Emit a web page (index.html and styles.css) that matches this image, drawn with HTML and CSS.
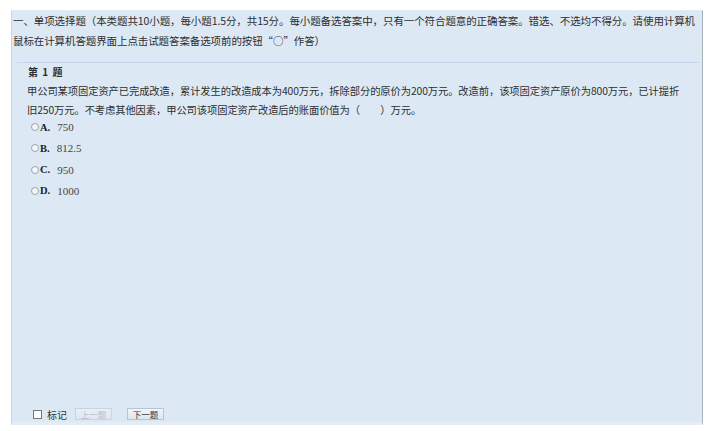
FILE: index.html
```html
<!DOCTYPE html>
<html lang="zh-CN">
<head>
<meta charset="utf-8">
<link rel="stylesheet" href="styles.css">
</head>
<body>
<div class="panel">
  <div class="header">一、单项选择题（本类题共10小题，每小题1.5分，共15分。每小题备选答案中，只有一个符合题意的正确答案。错选、不选均不得分。请使用计算机<br>鼠标在计算机答题界面上点击试题答案备选项前的按钮“○”作答）</div>
  <div class="sep"></div>
  <div class="content">
    <div class="qno">第&nbsp;1&nbsp;题</div>
    <div class="question">甲公司某项固定资产已完成改造，累计发生的改造成本为400万元，拆除部分的原价为200万元。改造前，该项固定资产原价为800万元，已计提折<br>旧250万元。不考虑其他因素，甲公司该项固定资产改造后的账面价值为（　　）万元。</div>
    <div class="options">
      <label class="opt"><span class="radio"></span><b class="letter">A.</b><span class="val">750</span></label>
      <label class="opt"><span class="radio"></span><b class="letter">B.</b><span class="val">812.5</span></label>
      <label class="opt"><span class="radio"></span><b class="letter">C.</b><span class="val">950</span></label>
      <label class="opt"><span class="radio"></span><b class="letter">D.</b><span class="val">1000</span></label>
    </div>
  </div>
  <div class="footer">
    <span class="check"></span><span class="mark">标记</span>
    <span class="btn disabled">上一题</span>
    <span class="btn">下一题</span>
  </div>
</div>
</body>
</html>
```
FILE: styles.css
```css
html, body {
  margin: 0;
  padding: 0;
  background: #ffffff;
}
body {
  font-family: "Noto Sans CJK SC", "DejaVu Sans", sans-serif;
  color: #2e2e2e;
}
.panel {
  margin: 10px 4px 0 11px;
  height: 415px;
  box-sizing: border-box;
  background: #dce9f5;
  border-left: 1px solid #c2d6ec;
  border-top: 1px solid #e3ecf5;
  border-right: 1px solid #a9b0b8;
  border-bottom: 3px solid #e4edf6;
  display: flex;
  flex-direction: column;
}
.header {
  font-size: 10.5px;
  line-height: 20px;
  padding: 0 2px 11px 1px;
  white-space: nowrap;
  letter-spacing: -0.1px;
}
.sep {
  height: 1px;
  background: #c4d6ec;
  margin: 0 3px 0 5px;
}
.content {
  flex: 1;
  padding: 0 16px 0 15px;
}
.qno {
  font-size: 10px;
  font-weight: bold;
  line-height: 16px;
  margin-top: 1px;
  margin-left: 1px;
  word-spacing: 2px;
}
.question {
  font-size: 10.3px;
  line-height: 19px;
  margin-top: 1px;
  white-space: nowrap;
  letter-spacing: -0.1px;
}
.options {
  display: flex;
  flex-direction: column;
  gap: 5.3px;
}
.opt {
  display: flex;
  align-items: center;
  height: 16px;
}
.radio {
  box-sizing: border-box;
  width: 8px;
  height: 8px;
  border: 1px solid #98a4b2;
  border-radius: 50%;
  background: #f4f7fa;
  margin-left: 4px;
  margin-right: 1px;
}
.letter {
  font-family: "Liberation Serif", serif;
  font-size: 10.5px;
  color: #222;
  margin-right: 7px;
}
.val {
  font-family: "Liberation Serif", serif;
  font-size: 11px;
  color: #444;
}
.footer {
  display: flex;
  align-items: center;
  height: 14px;
  padding-left: 21px;
  margin-bottom: 1px;
}
.check {
  box-sizing: border-box;
  width: 9px;
  height: 9px;
  border: 1px solid #777;
  background: #fff;
  margin-right: 5px;
}
.mark {
  margin-right: 8px;
  font-size: 10px;
  color: #333;
}
.btn {
  box-sizing: border-box;
  width: 37px;
  height: 12px;
  line-height: 10px;
  text-align: center;
  font-size: 8.5px;
  border: 1px solid #b7c4d3;
  background: linear-gradient(#f2f5f9, #dde5ee);
  color: #333;
  margin-right: 15px;
}
.btn.disabled {
  color: #b5c2d2;
  background: linear-gradient(#e9eef4, #dfe7f0);
  border-color: #c8d4e2;
}
```
